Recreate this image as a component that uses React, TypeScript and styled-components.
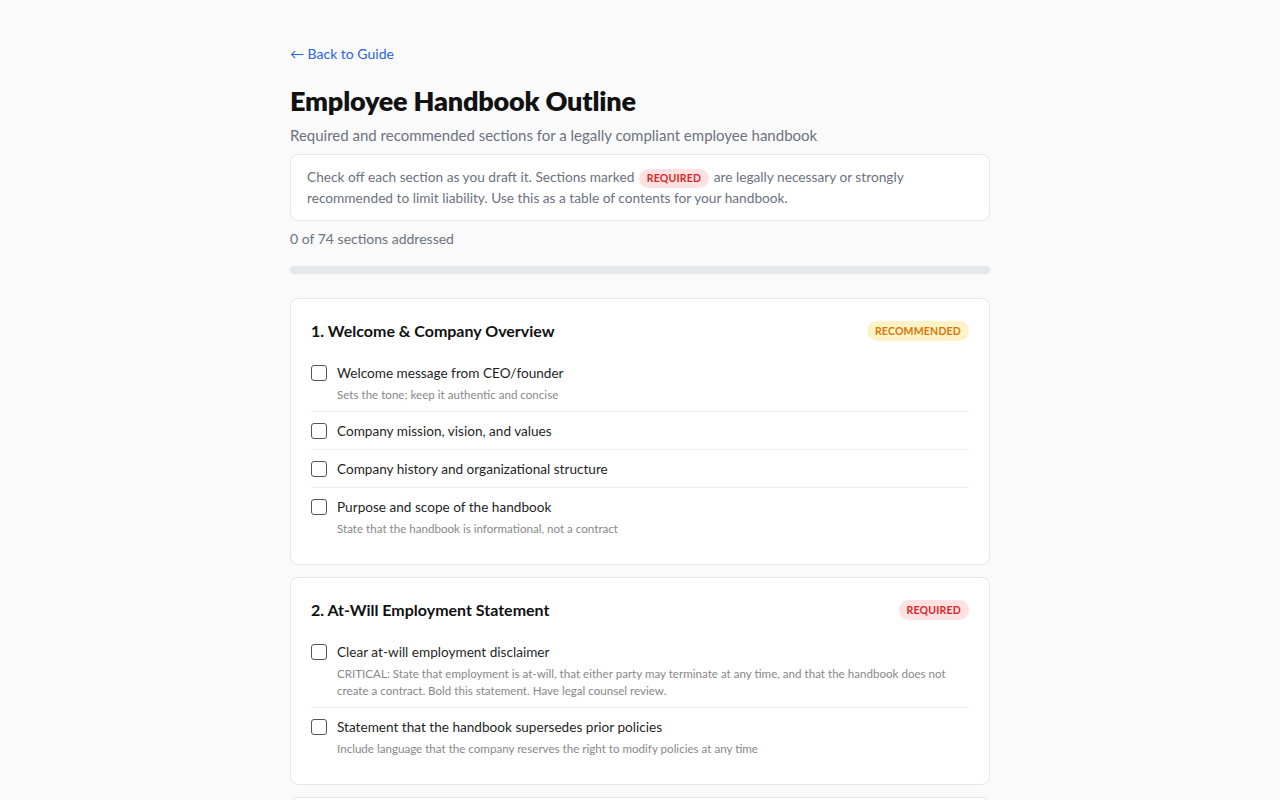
import React from "react";
import styled, { createGlobalStyle } from "styled-components";

const GlobalStyle = createGlobalStyle`
  html, body { margin: 0; padding: 0; background: #fafafa; }
  body { font-family: Lato, "Noto Sans", sans-serif; color: #1f2937; line-height: 20px; -webkit-font-smoothing: antialiased; }
  * { box-sizing: border-box; }
`;

const Page = styled.div`
  max-width: 700px;
  margin: 0 auto;
  padding: 44px 0 40px;
`;

const BackLink = styled.a`
  display: block;
  width: fit-content;
  color: #2563eb;
  font-size: 14px;
  line-height: 20px;
  text-decoration: none;
`;

const Title = styled.h1`
  margin: 21px 0 0;
  font-size: 27px;
  line-height: 32px;
  font-weight: 800;
  color: #111;
  letter-spacing: -0.2px;
`;

const Subtitle = styled.p`
  margin: 8px 0 0;
  font-size: 15px;
  line-height: 20px;
  color: #6b7280;
`;

const InfoBox = styled.div`
  margin-top: 9px;
  background: #fff;
  border: 1px solid #e5e7eb;
  border-radius: 8px;
  padding: 12px 16px;
  font-size: 13.7px;
  line-height: 20px;
  color: #6b7280;
`;

const Badge = styled.span<{ $tone: "required" | "recommended" }>`
  display: inline-flex;
  align-items: center;
  height: 20px;
  padding: 0 8px;
  border-radius: 10px;
  font-size: 10.5px;
  font-weight: 700;
  letter-spacing: 0.2px;
  background: ${(p) => (p.$tone === "required" ? "#fee2e2" : "#fef3c7")};
  color: ${(p) => (p.$tone === "required" ? "#dc2626" : "#d97706")};
  white-space: nowrap;
`;

const InlineBadge = styled(Badge)`
  height: 19px;
  line-height: 19px;
  margin: 0 1px;
  vertical-align: 0px;
`;

const Count = styled.div`
  margin-top: 8px;
  font-size: 14px;
  line-height: 20px;
  color: #6b7280;
`;

const Track = styled.div`
  margin-top: 17px;
  height: 8px;
  border-radius: 4px;
  background: #e5e7eb;
  overflow: hidden;
`;

const Fill = styled.div`
  height: 100%;
  background: #2563eb;
`;

const Cards = styled.div`
  margin-top: 24px;
  display: flex;
  flex-direction: column;
  gap: 12px;
`;

const Card = styled.section`
  background: #fff;
  border: 1px solid #e5e7eb;
  border-radius: 8px;
  padding: 19px 20px 19px;
`;

const CardHeader = styled.div`
  display: flex;
  align-items: center;
  justify-content: space-between;
  height: 26px;
  margin-bottom: 10px;
`;

const CardTitle = styled.h2`
  margin: 0;
  font-size: 16px;
  line-height: 26px;
  font-weight: 700;
  color: #111;
`;

const Item = styled.label`
  display: flex;
  gap: 10px;
  padding: 9px 0 8px;
  border-bottom: 1px solid #f0f0f0;
  cursor: pointer;
  &:last-child { border-bottom: none; padding-bottom: 8px; }
`;

const Box = styled.span`
  flex: none;
  width: 16px;
  height: 16px;
  margin-top: 2px;
  border: 1.5px solid #555;
  border-radius: 3px;
  background: #fff;
`;

const ItemText = styled.div`
  display: flex;
  flex-direction: column;
`;

const Label = styled.span`
  font-size: 13.6px;
  line-height: 20px;
  color: #1f1f1f;
`;

const Note = styled.span`
  margin-top: 3px;
  font-size: 11.6px;
  line-height: 17px;
  color: #888;
`;

type Entry = { label: string; note?: string };
type Section = { title: string; tone: "required" | "recommended"; items: Entry[] };

const sections: Section[] = [
  {
    title: "1. Welcome & Company Overview",
    tone: "recommended",
    items: [
      { label: "Welcome message from CEO/founder", note: "Sets the tone; keep it authentic and concise" },
      { label: "Company mission, vision, and values" },
      { label: "Company history and organizational structure" },
      { label: "Purpose and scope of the handbook", note: "State that the handbook is informational, not a contract" },
    ],
  },
  {
    title: "2. At-Will Employment Statement",
    tone: "required",
    items: [
      {
        label: "Clear at-will employment disclaimer",
        note: "CRITICAL: State that employment is at-will, that either party may terminate at any time, and that the handbook does not create a contract. Bold this statement. Have legal counsel review.",
      },
      {
        label: "Statement that the handbook supersedes prior policies",
        note: "Include language that the company reserves the right to modify policies at any time",
      },
    ],
  },
  {
    title: "3. Equal Employment Opportunity",
    tone: "required",
    items: [
      { label: "EEO policy statement", note: "Cover all federally protected classes plus state-specific ones" },
      { label: "Anti-harassment policy" },
      { label: "Reasonable accommodation policy" },
    ],
  },
];

export default function App() {
  const done = 0;
  const total = 74;
  return (
    <>
      <GlobalStyle />
      <Page>
        <BackLink href="#">← Back to Guide</BackLink>
        <Title>Employee Handbook Outline</Title>
        <Subtitle>Required and recommended sections for a legally compliant employee handbook</Subtitle>
        <InfoBox>
          Check off each section as you draft it. Sections marked <InlineBadge $tone="required">REQUIRED</InlineBadge> are
          legally necessary or strongly recommended to limit liability. Use this as a table of contents for your handbook.
        </InfoBox>
        <Count>
          {done} of {total} sections addressed
        </Count>
        <Track>
          <Fill style={{ width: `${(done / total) * 100}%` }} />
        </Track>
        <Cards>
          {sections.map((s) => (
            <Card key={s.title}>
              <CardHeader>
                <CardTitle>{s.title}</CardTitle>
                <Badge $tone={s.tone}>{s.tone === "required" ? "REQUIRED" : "RECOMMENDED"}</Badge>
              </CardHeader>
              {s.items.map((it) => (
                <Item key={it.label}>
                  <Box />
                  <ItemText>
                    <Label>{it.label}</Label>
                    {it.note && <Note>{it.note}</Note>}
                  </ItemText>
                </Item>
              ))}
            </Card>
          ))}
        </Cards>
      </Page>
    </>
  );
}
